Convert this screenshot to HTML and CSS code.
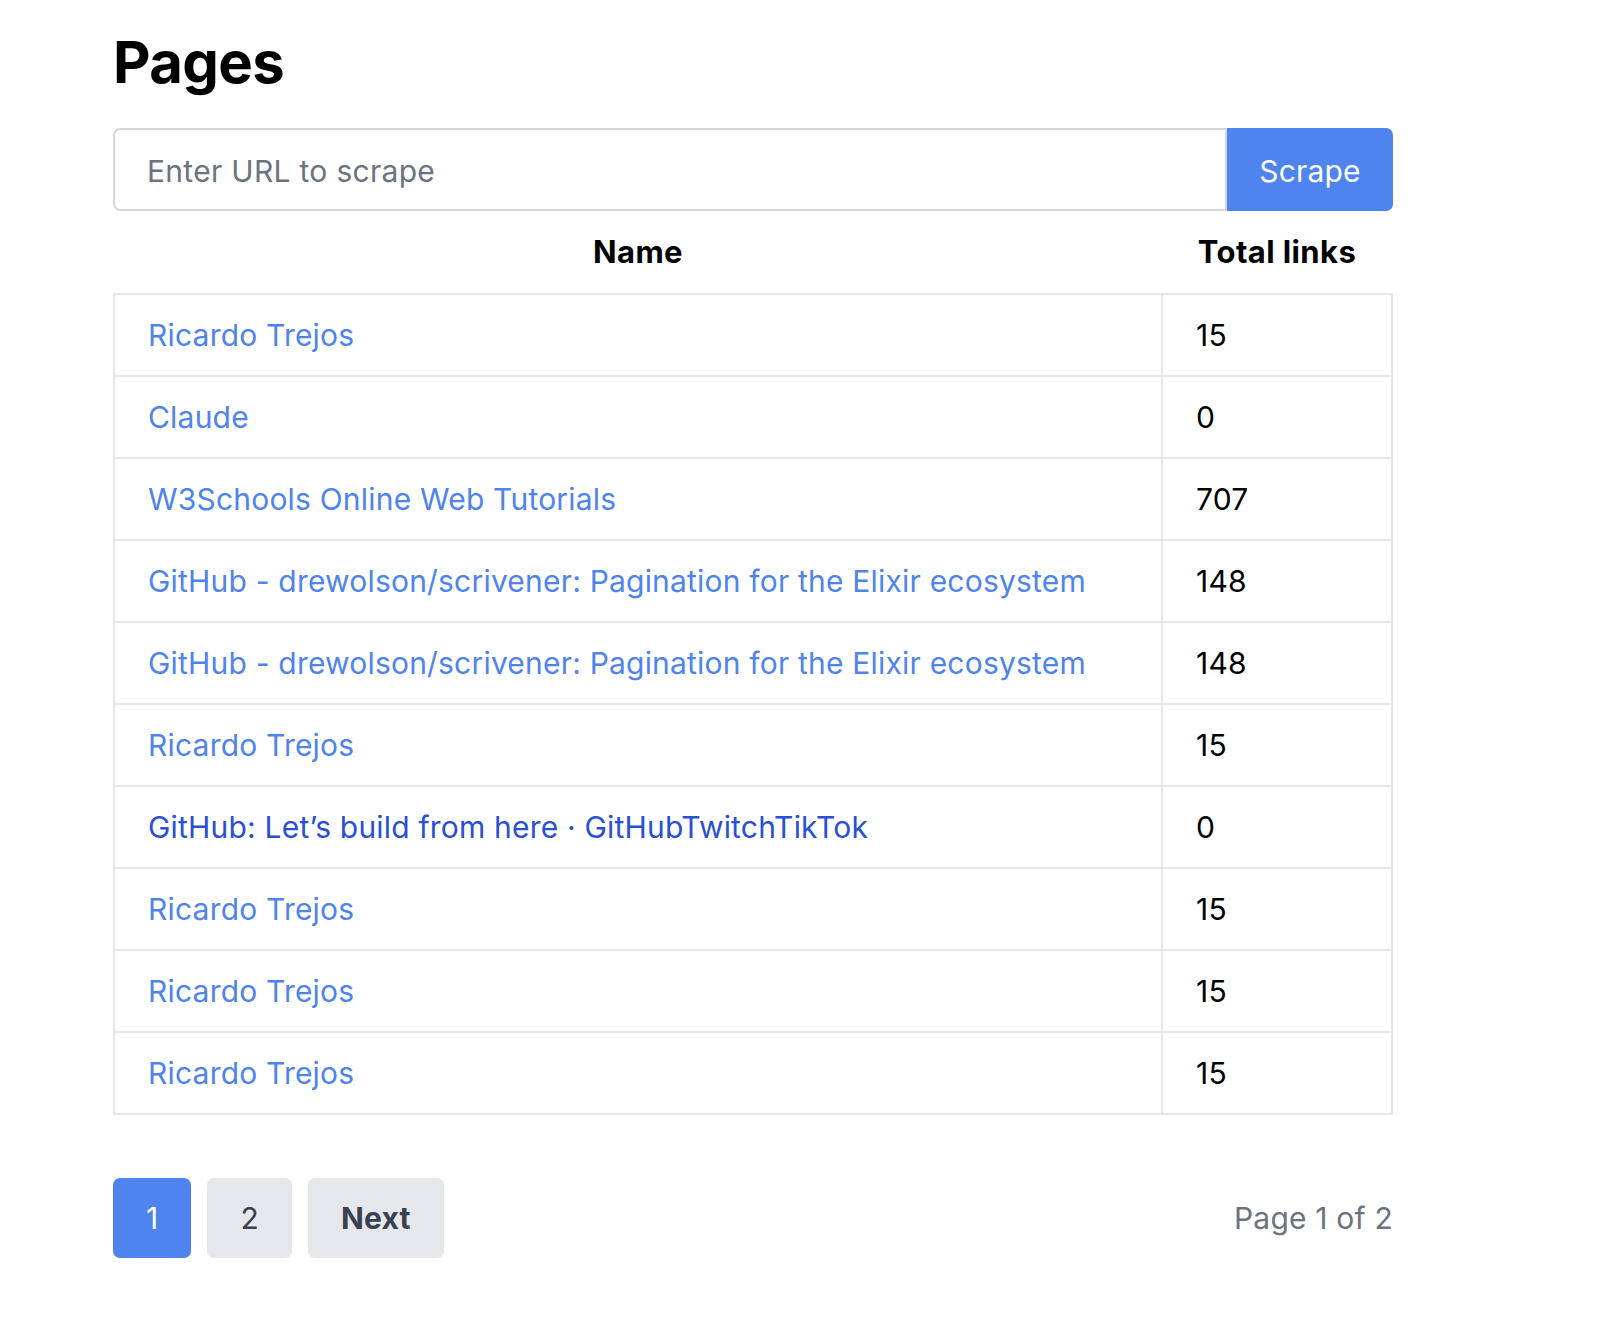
FILE: index.html
```html
<!DOCTYPE html>
<html lang="en">
<head>
<meta charset="utf-8">
<title>Pages</title>
<link rel="stylesheet" href="styles.css">
</head>
<body>
<main class="container">
  <h1 class="title">Pages</h1>
  <form class="scrape-form">
    <input class="url-input" type="text" placeholder="Enter URL to scrape">
    <button class="scrape-btn" type="button">Scrape</button>
  </form>
  <table class="pages-table">
    <colgroup><col class="col-name"><col class="col-links"></colgroup>
    <thead>
      <tr><th>Name</th><th>Total links</th></tr>
    </thead>
    <tbody>
      <tr><td><a class="link" href="#">Ricardo Trejos</a></td><td>15</td></tr>
      <tr><td><a class="link" href="#">Claude</a></td><td>0</td></tr>
      <tr><td><a class="link" href="#">W3Schools Online Web Tutorials</a></td><td>707</td></tr>
      <tr><td><a class="link" href="#">GitHub - drewolson/scrivener: Pagination for the Elixir ecosystem</a></td><td>148</td></tr>
      <tr><td><a class="link" href="#">GitHub - drewolson/scrivener: Pagination for the Elixir ecosystem</a></td><td>148</td></tr>
      <tr><td><a class="link" href="#">Ricardo Trejos</a></td><td>15</td></tr>
      <tr><td><a class="link visited" href="#">GitHub: Let’s build from here · GitHubTwitchTikTok</a></td><td>0</td></tr>
      <tr><td><a class="link" href="#">Ricardo Trejos</a></td><td>15</td></tr>
      <tr><td><a class="link" href="#">Ricardo Trejos</a></td><td>15</td></tr>
      <tr><td><a class="link" href="#">Ricardo Trejos</a></td><td>15</td></tr>
    </tbody>
  </table>
  <nav class="pagination">
    <div class="pager">
      <a class="page-btn active" href="#">1</a>
      <a class="page-btn" href="#">2</a>
      <a class="page-btn next" href="#">Next</a>
    </div>
    <span class="page-info">Page 1 of 2</span>
  </nav>
</main>
</body>
</html>
```
FILE: styles.css
```css
html, body {
  margin: 0;
  padding: 0;
  background: #ffffff;
}
body {
  font-family: Inter, "Noto Sans", "Liberation Sans", sans-serif;
  color: #000;
  font-size: 30px;
  letter-spacing: 0.2px;
}
.container {
  width: 1280px;
  margin-left: 113px;
  padding-top: 26px;
}
.title {
  margin: 0 0 30px 0;
  font-size: 58px;
  line-height: 72px;
  font-weight: 700;
  letter-spacing: -0.6px;
}
.scrape-form {
  display: flex;
  margin: 0;
}
.url-input {
  flex: 1;
  height: 83px;
  box-sizing: border-box;
  border: 2px solid #d4d6da;
  border-radius: 7px 0 0 7px;
  padding: 2px 32px 0 32px;
  font-family: inherit;
  font-size: 30px;
  letter-spacing: 0.3px;
  color: #111;
  outline: none;
}
.url-input::placeholder {
  color: #6b7280;
}
.scrape-btn {
  width: 166px;
  height: 83px;
  border: 0;
  border-radius: 0 7px 7px 0;
  background: #4f83ee;
  color: #fff;
  font-family: inherit;
  font-size: 30px;
  letter-spacing: 0.2px;
  padding: 2px 0 0 0;
}
.pages-table {
  width: 1280px;
  border-collapse: collapse;
  table-layout: fixed;
}
.col-links {
  width: 230px;
}
.pages-table th {
  height: 82px;
  padding: 0;
  font-size: 31px;
  letter-spacing: 0.4px;
  font-weight: 700;
  text-align: center;
  line-height: 40px;
  vertical-align: middle;
}
.pages-table td {
  border: 2px solid #e6e7eb;
  padding: 20px 33px;
  line-height: 40px;
  text-align: left;
}
.link {
  color: #4f83ee;
  text-decoration: none;
}
.link.visited {
  color: #2a4fd5;
}
.pagination {
  display: flex;
  justify-content: space-between;
  align-items: center;
  margin-top: 63px;
}
.pager {
  display: flex;
  gap: 16px;
}
.page-btn {
  display: block;
  height: 80px;
  line-height: 80px;
  padding: 0 33px;
  border-radius: 7px;
  background: #e5e7eb;
  color: #374151;
  text-decoration: none;
}
.page-btn.active {
  background: #4f83ee;
  color: #fff;
}
.page-btn.next {
  font-weight: 700;
  padding: 0 33px;
}
.page-info {
  color: #6b7280;
}
```
